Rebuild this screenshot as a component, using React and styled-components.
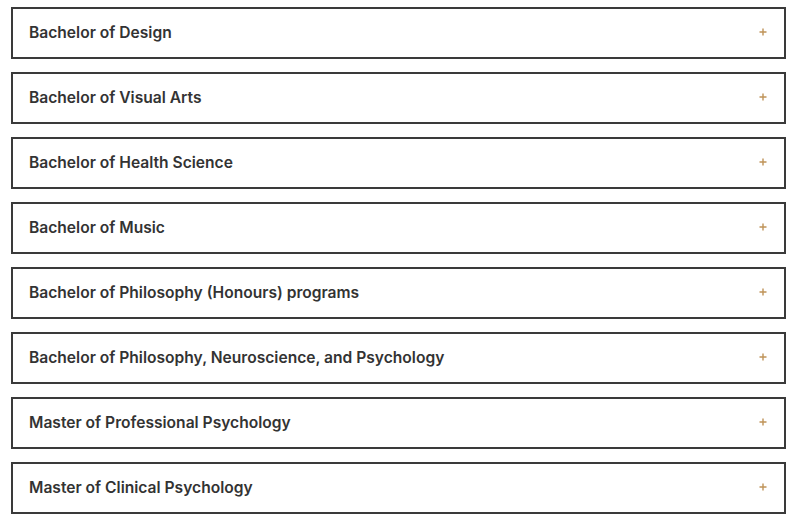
import React from "react";
import styled, { createGlobalStyle } from "styled-components";

const Global = createGlobalStyle`
  html, body { margin: 0; padding: 0; background: #ffffff; }
  body { font-family: "Inter", "Liberation Sans", sans-serif; }
`;

const Page = styled.div`
  padding: 7px 7px 8px 11px;
  display: flex;
  flex-direction: column;
  gap: 13px;
`;

const Item = styled.div`
  border: 2px solid #3a3a3a;
  background: #fff;
`;

const Header = styled.button`
  all: unset;
  box-sizing: border-box;
  width: 100%;
  height: 48px;
  display: flex;
  align-items: center;
  justify-content: space-between;
  padding: 0 17px 2px 16px;
  cursor: pointer;
`;

const Title = styled.span`
  font-family: "Inter", "Liberation Sans", sans-serif;
  font-weight: 600;
  font-size: 15.6px;
  color: #333333;
`;

const PlusIcon = styled.svg`
  width: 8px;
  height: 8px;
  display: block;
  color: #bf9358;
`;

const items = [
  "Bachelor of Design",
  "Bachelor of Visual Arts",
  "Bachelor of Health Science",
  "Bachelor of Music",
  "Bachelor of Philosophy (Honours) programs",
  "Bachelor of Philosophy, Neuroscience, and Psychology",
  "Master of Professional Psychology",
  "Master of Clinical Psychology",
];

export default function App() {
  return (
    <>
      <Global />
      <Page>
        {items.map((t) => (
          <Item key={t}>
            <Header>
              <Title>{t}</Title>
              <PlusIcon viewBox="0 0 8 8" aria-hidden="true">
                <path d="M4 0.5V7.5M0.5 4H7.5" stroke="currentColor" strokeWidth="1.4" fill="none" />
              </PlusIcon>
            </Header>
          </Item>
        ))}
      </Page>
    </>
  );
}
